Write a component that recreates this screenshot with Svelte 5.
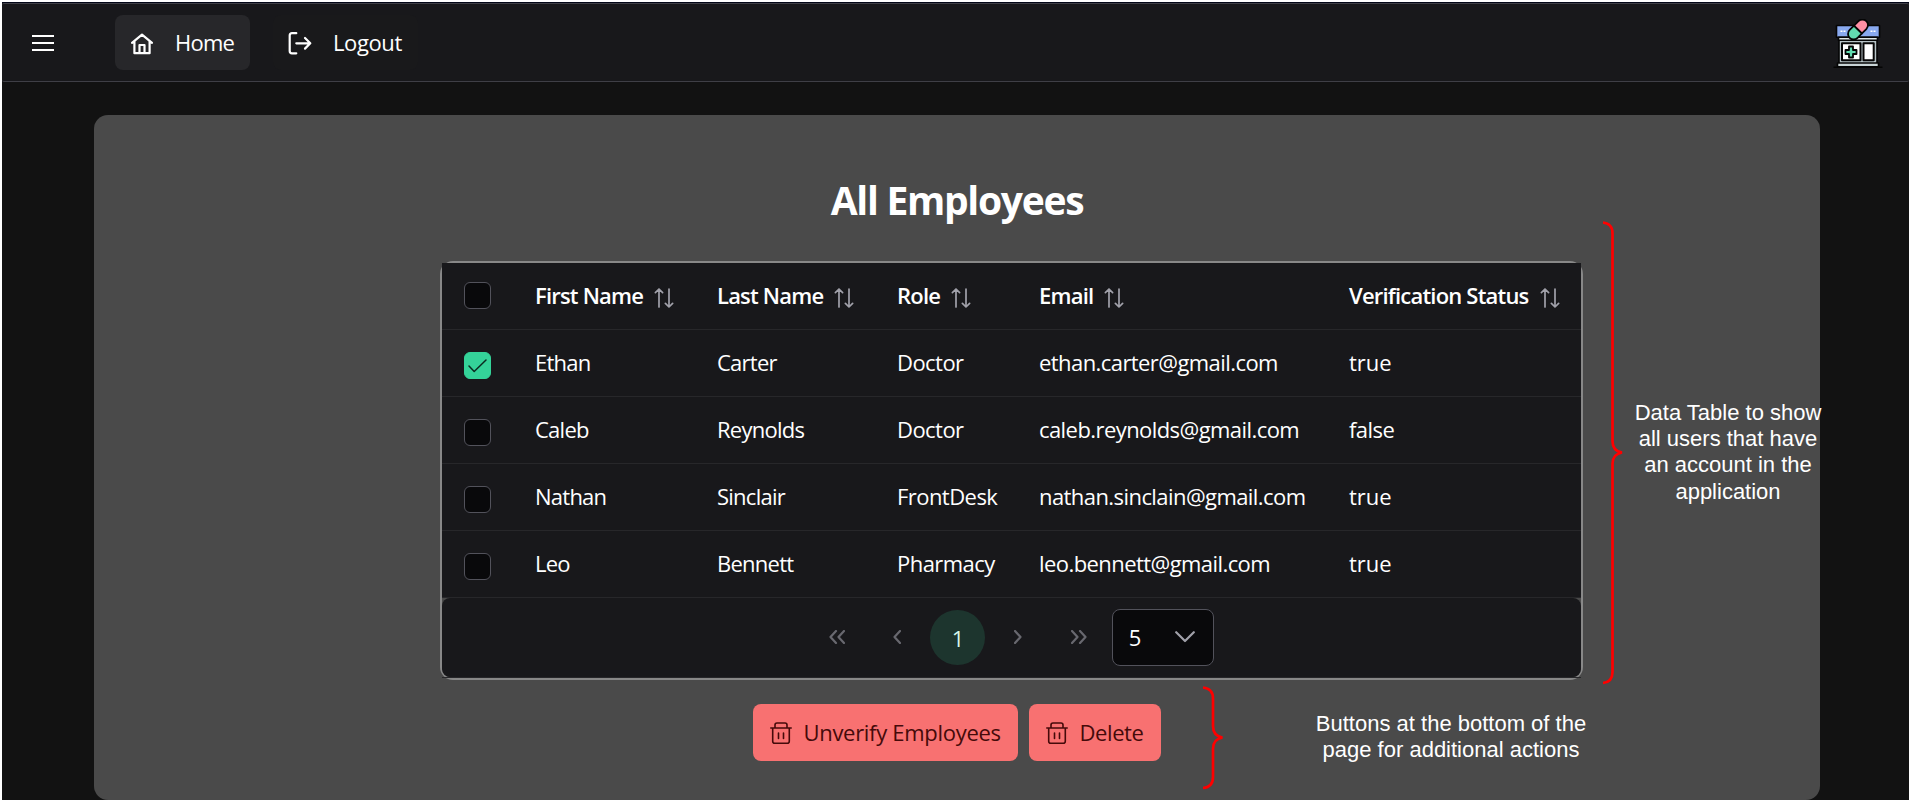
<script>
  const columns = [
    { label: 'First Name', width: 182 },
    { label: 'Last Name', width: 180 },
    { label: 'Role', width: 141 },
    { label: 'Email', width: 310 },
    { label: 'Verification Status', width: 254 }
  ];
  let rows = $state([
    { selected: true, cells: ['Ethan', 'Carter', 'Doctor', 'ethan.carter@gmail.com', 'true'] },
    { selected: false, cells: ['Caleb', 'Reynolds', 'Doctor', 'caleb.reynolds@gmail.com', 'false'] },
    { selected: false, cells: ['Nathan', 'Sinclair', 'FrontDesk', 'nathan.sinclain@gmail.com', 'true'] },
    { selected: false, cells: ['Leo', 'Bennett', 'Pharmacy', 'leo.bennett@gmail.com', 'true'] }
  ]);
</script>

{#snippet trash()}
  <svg class="trash" width="22" height="22" viewBox="0 0 22 22" fill="none" stroke="currentColor" stroke-width="1.6" stroke-linecap="round" stroke-linejoin="round">
    <path d="M.8 6h20.400M5 6V3q0-2 2-2h8q2 0 2 2v3M2.700 6v13.200q0 2 2 2h12.600q2 0 2-2V6M8.500 11v5.500M13.500 11v5.500" />
  </svg>
{/snippet}

<div class="screen">
  <header>
    <button class="menu" aria-label="Menu">
      <svg width="22" height="16" viewBox="0 0 22 16" fill="none" stroke="#fff" stroke-width="2"><path d="M0 1h22M0 8h22M0 15h22" /></svg>
    </button>
    <nav>
      <a class="item active" href="#home">
        <svg width="22" height="22" viewBox="0 0 22 22" fill="none" stroke="#fff" stroke-width="2.2" stroke-linecap="round" stroke-linejoin="round">
          <path d="M1 9.800 11 1.600 21 9.800M3.400 8.500v11.700h15.200V8.500M8.500 20v-8h5v8" />
        </svg>
        <span>Home</span>
      </a>
      <a class="item logout" href="#logout">
        <svg width="24" height="23" viewBox="0 0 24 23" fill="none" stroke="#fff" stroke-width="2.2" stroke-linecap="round" stroke-linejoin="round">
          <path d="M8.300 1.200H4q-2.300 0-2.300 2.300v15.500q0 2.300 2.300 2.300h4.300M8.300 11.300H22M17 6l5.300 5.300-5.300 5.300" />
        </svg>
        <span>Logout</span>
      </a>
    </nav>
    <svg class="logo" width="50" height="50" viewBox="0 0 50 50" stroke="#050505" stroke-width="1.6" stroke-linejoin="round">
      <path fill="#b5c1c5" d="M6 19h38v27H6z" />
      <path fill="#89a9ef" d="M3.500 6.500h43v11.700h-43z" />
      <path fill="#dfe7e8" d="M5.500 18.200h39v3h-39z" />
      <path fill="#fff" stroke-width="2" d="M9 24.300h18.500v17H9zM30.500 24.300h10.200v17H30.500z" />
      <path fill="#c8d3d5" d="M4.500 44h41v3.700h-41z" />
      <path fill="none" d="M.5 48.200h49" />
      <path fill="none" stroke="#fff" stroke-dasharray="2 1" d="M7.500 12.300h5M37.500 12.300h5" />
      <path fill="#62dbb0" stroke-width="1.8" d="M16 27.500h4v3.500h3.500v4H20v3.500h-4V35h-3.500v-4H16z" />
      <g transform="rotate(-45 25 10.500)" stroke-width="1.8">
        <path fill="#62dbb0" d="M25 4.900H18.800a5.600 5.600 0 0 0 0 11.200H25z" />
        <path fill="#ff8fa5" d="M25 4.900h6.200a5.600 5.600 0 0 1 0 11.200H25z" />
      </g>
    </svg>
  </header>

  <main>
    <h1>All Employees</h1>
    <section class="frame">
      <table>
        <colgroup>
          <col style="width: 72px" />
          {#each columns as c}<col style="width: {c.width}px" />{/each}
        </colgroup>
        <thead>
          <tr>
            <th><span class="check"></span></th>
            {#each columns as c}
              <th>
                <div class="head">
                  <span>{c.label}</span>
                  <svg width="20" height="20" viewBox="0 0 20 20" fill="none" stroke="#a1a1aa" stroke-width="1.7" stroke-linecap="round" stroke-linejoin="round">
                    <path d="M5 19V1.200M1.400 4.600 5 1l3.600 3.600M15 1v17.800M11.400 15.400 15 19l3.600-3.600" />
                  </svg>
                </div>
              </th>
            {/each}
          </tr>
        </thead>
        <tbody>
          {#each rows as row}
            <tr>
              <td>
                <button class="check" class:on={row.selected} aria-label="Select row" onclick={() => (row.selected = !row.selected)}>
                  {#if row.selected}
                    <svg width="19" height="14" viewBox="0 0 19 14" fill="none" stroke="#0b2b20" stroke-width="1.500" stroke-linecap="round" stroke-linejoin="round"><path d="M1 7l5.200 5.500L18 1" /></svg>
                  {/if}
                </button>
              </td>
              {#each row.cells as cell, i}<td class:name={i < 2} class:verified={cell === 'true'}>{cell}</td>{/each}
            </tr>
          {/each}
        </tbody>
      </table>
      <div class="pager-wrap">
        <div class="pager">
          <span class="page"><svg width="16" height="14" viewBox="0 0 16 14"><path d="M7 1 1.500 7 7 13M15 1 9.500 7l5.500 6" /></svg></span>
          <span class="page"><svg width="8" height="14" viewBox="0 0 8 14"><path d="M7 1 1.500 7 7 13" /></svg></span>
          <span class="page current">1</span>
          <span class="page"><svg width="8" height="14" viewBox="0 0 8 14"><path d="M1 1l5.500 6L1 13" /></svg></span>
          <span class="page"><svg width="16" height="14" viewBox="0 0 16 14"><path d="M1 1l5.500 6L1 13M9 1l5.500 6L9 13" /></svg></span>
          <div class="select">
            <span>5</span>
            <svg width="20" height="12" viewBox="0 0 20 12" fill="none" stroke="#a1a1aa" stroke-width="2.2" stroke-linecap="round" stroke-linejoin="round"><path d="M1.200 1.200 10 10l8.800-8.800" /></svg>
          </div>
        </div>
      </div>
    </section>
    <div class="actions">
      <button class="danger wide">{@render trash()}<span>Unverify Employees</span></button>
      <button class="danger">{@render trash()}<span>Delete</span></button>
    </div>
  </main>

  <svg class="brace table-brace" width="24" height="464" viewBox="0 0 24 464">
    <path d="M2 1.500q9.500 1 9.500 11V220q0 10 9.500 11.500q-9.500 1.500-9.500 11.500v208q0 10-9.500 11" />
  </svg>
  <p class="note table-note">Data Table to show<br />all users that have<br />an account in the<br />application</p>
  <svg class="brace button-brace" width="24" height="104" viewBox="0 0 24 104">
    <path d="M2 1.500q10 1 10 11V40q0 10 9.500 11.500q-9.500 1.500-9.500 11.500v28q0 10-10 11" />
  </svg>
  <p class="note button-note">Buttons at the bottom of the<br />page for additional actions</p>
</div>

<style>
  :global(body) { background: #fff; }
  * { box-sizing: border-box; }
  svg { display: block; flex: none; }
  button { font: inherit; border: 0; padding: 0; background: none; color: inherit; letter-spacing: inherit; }
  .screen {
    position: relative;
    width: 1907px;
    height: 798px;
    margin: 2px;
    overflow: hidden;
    background: #121212;
    color: #fff;
    font: 22px/30px 'Segoe UI', 'Open Sans', sans-serif;
    letter-spacing: -0.55px;
    border-top: 1px solid #020617;
    display: flex;
    flex-direction: column;
  }
  header {
    height: 79px;
    flex: none;
    display: flex;
    align-items: center;
    padding: 0 26px 0 30px;
    background: #18181b;
    border: 1px solid #3f3f46;
    border-width: 1px 0;
    border-radius: 2px;
  }
  .menu { margin-right: 61px; }
  nav { display: flex; gap: 23px; flex: 1; }
  .item {
    display: flex;
    align-items: center;
    height: 55px;
    width: 135px;
    padding-left: 16px;
    gap: 22px;
    border-radius: 8px;
    color: #fff;
    text-decoration: none;
  }
  .item span { position: relative; top: -1px; }
  .item.active { background: #27272a; letter-spacing: -0.75px; }
  .item.logout { width: 145px; padding-left: 15px; gap: 21px; background: #19191b; letter-spacing: -0.4px; }
  .item svg { position: relative; top: 1px; }
  .logo { margin-top: 2px; }
  main {
    width: 1726px;
    height: 685px;
    margin: 33px 0 0 92px;
    padding: 60px 0 0;
    background: #4a4a4a;
    border-radius: 14px;
    display: flex;
    flex-direction: column;
    align-items: center;
    flex: none;
  }
  h1 { margin: 0 0 36px; font: 700 39px/50px 'Segoe UI', 'Open Sans', sans-serif; letter-spacing: -1.3px; }
  .frame { width: 1143px; margin-left: 346px; align-self: flex-start; border: 2px solid #888; border-radius: 13px; }
  table { width: 1139px; table-layout: fixed; border-collapse: separate; border-spacing: 0; background: #18181b; }
  th, td { height: 67px; padding: 0 0 2px 21px; text-align: left; border-bottom: 1px solid #27272a; white-space: nowrap; }
  th:first-child, td:first-child { padding: 0 0 0 22px; }
  th:nth-child(n + 5), td:nth-child(n + 5) { padding-left: 22px; }
  td:nth-child(5) { letter-spacing: -0.57px; }
  th { font-weight: 600; letter-spacing: -0.8px; }
  td.name { letter-spacing: -0.75px; }
  td.verified { letter-spacing: -0.05px; }
  .head { display: flex; align-items: center; gap: 11px; }
  .head svg { margin-top: 6px; }
  .check {
    display: flex;
    align-items: center;
    justify-content: center;
    width: 27px;
    height: 27px;
    border: 1px solid #52525b;
    border-radius: 6px;
    background: #09090b;
  }
  th .check { margin-top: -1px; }
  td .check { margin-top: 5px; }
  .check.on { background: #34d399; border-color: #34d399; }
  .pager-wrap { border-bottom: 1px solid #27272a; height: 80px; }
  .pager {
    height: 79px;
    display: flex;
    align-items: center;
    justify-content: center;
    gap: 5.5px;
    background: #18181b;
    border-radius: 8px;
  }
  .page { width: 55px; height: 55px; border-radius: 50%; display: flex; align-items: center; justify-content: center; }
  .page svg { margin-top: -1px; }
  .page path { fill: none; stroke: #68686f; stroke-width: 2.2; stroke-linecap: round; stroke-linejoin: round; }
  .current { background: #1d352e; color: #d5f5e9; }
  .select {
    width: 102px;
    height: 57px;
    padding: 0 18px 2px 16px;
    display: flex;
    align-items: center;
    justify-content: space-between;
    border: 1px solid #52525b;
    border-radius: 8px;
    background: #09090b;
  }
  .actions { display: flex; gap: 11px; margin: 24px 0 0 -1px; }
  .danger {
    width: 132px;
    height: 57px;
    padding-left: 18px;
    display: flex;
    align-items: center;
    gap: 11px;
    border-radius: 8px;
    background: #f87171;
    color: #450a0a;
    font-weight: 500;
    white-space: nowrap;
    letter-spacing: -0.4px;
  }
  .danger.wide { width: 265px; letter-spacing: -0.3px; }
  .danger svg { margin: 1px 0 0 -1px; }
  .danger span { margin: -2px 0 0 1px; }
  .brace { position: absolute; fill: none; stroke: #f00; stroke-width: 2.7; }
  .table-brace { left: 1599px; top: 218px; }
  .button-brace { left: 1199px; top: 683px; }
  .note {
    position: absolute;
    margin: 0;
    text-align: center;
    white-space: nowrap;
    font: 22px/26.400px 'Liberation Sans', Arial, sans-serif;
    letter-spacing: 0;
    transform: translateX(-50%);
  }
  .table-note { left: 1726px; top: 396.500px; }
  .button-note { left: 1449px; top: 708px; }
</style>
